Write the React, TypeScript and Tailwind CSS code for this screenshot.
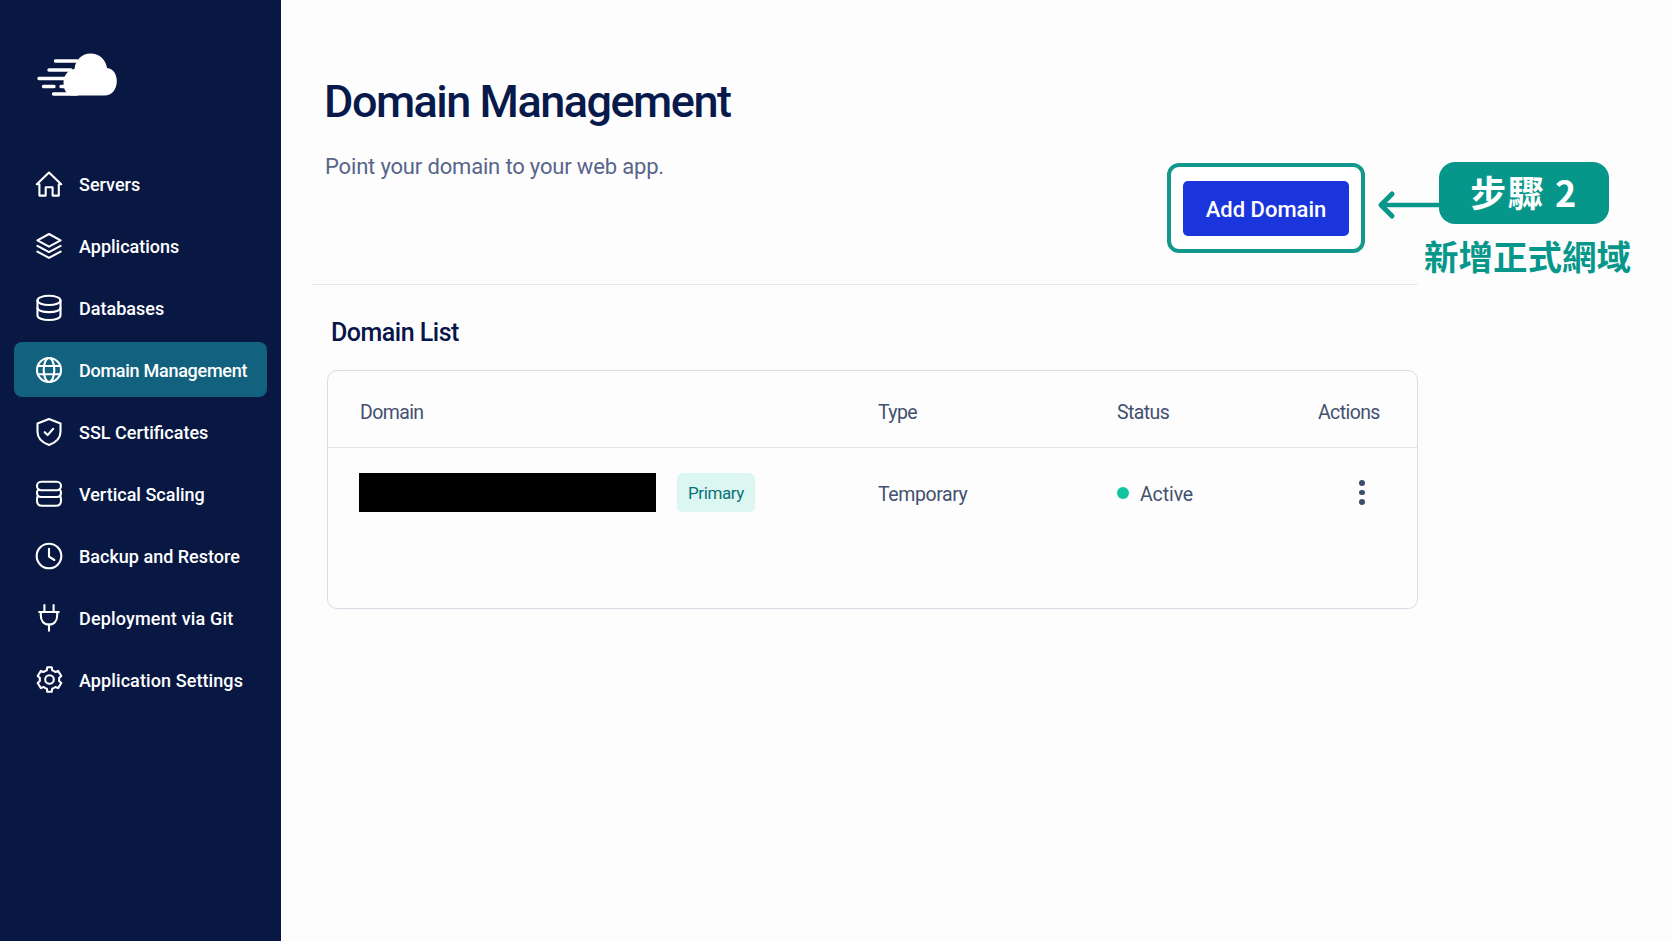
import type { ReactNode } from 'react';
import { clsx } from 'clsx';

const ICONS: Record<string, ReactNode> = {
  home: <path d="M.8 13.2 13 1.6l12.2 11.6h-2.4v11.4h-6.2v-8.4H9.7v8.4H3.4V13.2z" />,
  layers: (
    <>
      <path d="M13 1 24.6 7.3 13 13.6 1.4 7.3z" />
      <path d="M1.4 12.9 13 19.2l11.6-6.3" />
      <path d="M1.4 18.6 13 24.9l11.6-6.3" />
    </>
  ),
  database: (
    <>
      <ellipse cx="13" cy="5.4" rx="11.5" ry="4.6" />
      <path d="M1.5 5.4v15c0 2.6 5.1 4.6 11.5 4.6s11.5-2 11.5-4.6v-15" />
      <path d="M1.5 13c0 2.3 5.1 4.1 11.5 4.1S24.5 15.3 24.5 13" />
    </>
  ),
  globe: (
    <>
      <circle cx="13" cy="13" r="12" />
      <ellipse cx="13" cy="13" rx="5.3" ry="12" />
      <path d="M1.8 9h22.4M1.8 17.3h22.4" />
    </>
  ),
  shield: (
    <>
      <path d="M13 0 24.5 4.4v8.3c0 6.3-4.3 10.7-11.5 13.3C5.8 23.4 1.5 19 1.5 12.7V4.4z" />
      <path d="m8.7 13.2 2.9 2.9 5.6-6.3" />
    </>
  ),
  storage: (
    <>
      <rect x="1" y="0.8" width="24" height="8.4" rx="4.2" />
      <path d="M2.4 8.4C1.5 9.4 1 10.6 1 12c0 2.6 1.6 4 4.200 4h15.600c2.600 0 4.200-1.400 4.200-4 0-1.400-.5-2.600-1.400-3.600" />
      <path d="M2 15c-.7.800-1 1.900-1 3.200v1.600c0 3.200 1.800 5 5 5h14c3.200 0 5-1.800 5-5v-1.600c0-1.300-.3-2.400-1-3.200" />
    </>
  ),
  clock: (
    <>
      <circle cx="13" cy="13" r="12.3" />
      <path d="M13 5.8v7.8l5.4 3.4" />
    </>
  ),
  plug: (
    <>
      <path d="M8.4 0v6.6M17.6 0v6.6" />
      <path d="M3.2 7h19.6" />
      <path d="M4.8 7v3.5c0 5.2 3 9 8.2 9s8.2-3.8 8.2-9V7" />
      <path d="M13 19.5v6.3" />
    </>
  )
};

function NavIcon({ name }: { name: string }) {
  if (name === 'settings') {
    return (
      <svg viewBox="1 1 22 22" className="size-[27px] shrink-0 overflow-visible" fill="none" stroke="currentColor" strokeWidth="1.7" strokeLinejoin="round">
        <circle cx="12" cy="12" r="3.5" />
        <path d="M9.8 4.5 10.2 2h3.6l.4 2.5 1.1.5c.5.3 1 .6 1.4.9l2.4-.9 2.5 4.2-1.8 1.6a7 7 0 0 1 0 2.4l1.8 1.6-2.5 4.2-2.4-.9c-.4.3-.9.6-1.4.9l-1.1.5-.4 2.5h-3.6l-.4-2.5-1.1-.5c-.5-.3-1-.6-1.4-.9l-2.4.9-2.5-4.2 1.8-1.6a7 7 0 0 1 0-2.4L2.4 9.2 4.9 5l2.4.9c.4-.3.9-.6 1.4-.9z" />
      </svg>
    );
  }

  return (
    <svg
      viewBox="0 0 26 26"
      className="size-[26px] shrink-0 overflow-visible"
      fill="none"
      stroke="currentColor"
      strokeWidth="2.1"
      strokeLinecap="round"
      strokeLinejoin="round"
    >
      {ICONS[name]}
    </svg>
  );
}

const navItems = [
  { label: 'Servers', icon: 'home' },
  { label: 'Applications', icon: 'layers' },
  { label: 'Databases', icon: 'database' },
  { label: 'Domain Management', icon: 'globe', active: true },
  { label: 'SSL Certificates', icon: 'shield' },
  { label: 'Vertical Scaling', icon: 'storage' },
  { label: 'Backup and Restore', icon: 'clock' },
  { label: 'Deployment via Git', icon: 'plug', className: 'tracking-[0.17px]' },
  { label: 'Application Settings', icon: 'settings', className: 'tracking-[0.09px]' }
];

function Logo() {
  return (
    <svg viewBox="0 0 80 43" className="ml-[37px] h-[43px] w-20" fill="white" stroke="white" strokeLinecap="round">
      <path d="M35 42.5c-5 0-8.5-5.5-8.5-13 0-7 4.5-12.5 11-13.5C38.5 6.5 45 .5 53.5.5S69 6.5 70 15c6 .5 9.8 6 9.8 13.2 0 8-5 14.3-12.3 14.3z" stroke="none" />
      <path d="M18.5 8H40M12 17h22M2 25.5h28M6.5 33.5H17M24 33.5h8M16.5 41H40" strokeWidth="3.4" />
    </svg>
  );
}

function Sidebar() {
  return (
    <aside className="w-[281px] shrink-0 bg-[#081843] pt-[53px] text-white">
      <Logo />
      <nav className="mt-[60px] flex flex-col gap-[7px] px-3.5">
        {navItems.map((item) => (
          <a
            key={item.label}
            href="#"
            className={clsx(
              'flex h-[55px] items-center gap-[17px] rounded-lg pl-[22px] text-[18px] font-medium whitespace-nowrap',
              item.active && 'bg-[#11617f] tracking-[-0.27px]',
              item.className
            )}
          >
            <span className="flex w-[26px] shrink-0 justify-center">
              <NavIcon name={item.icon} />
            </span>
            <span className="pt-0.5">{item.label}</span>
          </a>
        ))}
      </nav>
    </aside>
  );
}

function StepCallout() {
  return (
    <div className="absolute top-[162px] left-[1376px] w-[270px] font-['Noto_Sans_CJK_TC',sans-serif] font-bold">
      <div className="flex items-start">
        <svg viewBox="0 0 63 62" className="h-[62px] w-[63px]" fill="none" stroke="#07978a" strokeWidth="4.5">
          <path d="M5 43H64" />
          <path d="M16 32 5 43l11 11" strokeWidth="5" strokeLinecap="round" strokeLinejoin="round" />
        </svg>
        <div className="flex h-[62px] w-[170px] items-center justify-center rounded-2xl bg-[#07978a] pb-1 text-[36px] leading-none tracking-[1.5px] text-white">
          步驟 2
        </div>
      </div>
      <p className="mt-[13px] pl-12 text-[34.5px] leading-[36px] whitespace-nowrap text-[#07978a]">新增正式網域</p>
    </div>
  );
}

function DomainTable() {
  return (
    <div className="h-[239px] w-[1091px] rounded-[10px] border border-[#d9dce6] text-[19.5px] tracking-[-0.6px] text-[#44506f]">
      <div className="flex h-[77px] items-center border-b border-[#e1e4ec] pt-[7px] pl-8">
        <span className="w-[518px]">Domain</span>
        <span className="w-[239px]">Type</span>
        <span className="w-[201px]">Status</span>
        <span>Actions</span>
      </div>
      <div className="flex h-[89px] items-center pl-[31px]">
        <div className="flex w-[519px] items-center gap-[21px]">
          <div className="h-[39px] w-[297px] bg-black" />
          <span className="flex h-[39px] w-[78px] items-center justify-center rounded-md bg-[#dcf6f2] pt-0.5 text-[17px] tracking-[-0.4px] text-[#0a7278]">
            Primary
          </span>
        </div>
        <span className="w-[239px] pt-[5px] tracking-[-0.4px]">Temporary</span>
        <span className="flex w-[242px] items-center gap-[11px]">
          <span className="size-3 rounded-full bg-[#12c3a0]" />
          <span className="pt-1 tracking-[-0.1px]">Active</span>
        </span>
        <button type="button" aria-label="Actions" className="flex flex-col gap-1">
          <span className="size-[5.5px] rounded-full bg-[#3f4d6c]" />
          <span className="size-[5.5px] rounded-full bg-[#3f4d6c]" />
          <span className="size-[5.5px] rounded-full bg-[#3f4d6c]" />
        </button>
      </div>
    </div>
  );
}

export default function App() {
  return (
    <div className="relative flex h-[941px] w-[1672px] overflow-hidden bg-[#fdfdfe] font-['Roboto',sans-serif]">
      <Sidebar />

      <main className="flex-1 pl-[31px]">
        <header className="flex h-[285px] w-[1106px] justify-between border-b border-[#e7e8ef] pr-[53px] pl-3">
          <div className="pt-[75px]">
            <h1 className="text-[45px] leading-[54px] font-medium tracking-[-1.5px] text-[#071a4b]">Domain Management</h1>
            <p className="mt-[25px] pl-px text-[22px] leading-[26px] tracking-[-0.17px] text-[#58648a]">
              Point your domain to your web app.
            </p>
          </div>
          <div className="mt-[163px] flex h-[90px] w-[198px] items-center justify-center rounded-xl border-4 border-[#12998c] bg-white">
            <button
              type="button"
              className="h-[55px] w-[166px] rounded-[5px] bg-[#1a35dc] pt-0.5 text-[22px] font-medium text-white"
            >
              Add Domain
            </button>
          </div>
        </header>

        <section className="pt-8 pl-[15px]">
          <h2 className="mb-[22px] pl-1 text-[25px] leading-[31px] font-medium tracking-[-0.5px] text-[#08154a]">
            Domain List
          </h2>
          <DomainTable />
        </section>
      </main>

      <StepCallout />
    </div>
  );
}
